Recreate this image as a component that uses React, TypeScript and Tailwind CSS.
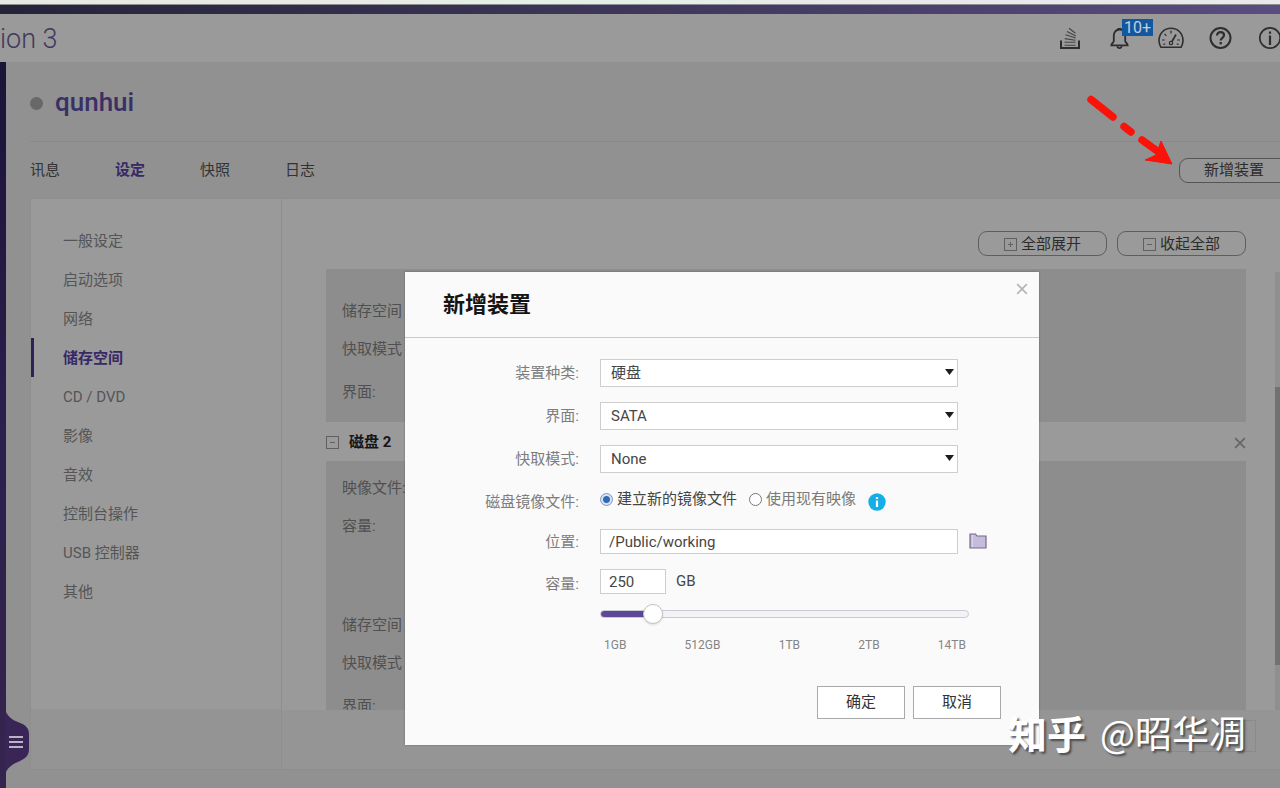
import { useState } from "react";

const tabs = ["讯息", "设定", "快照", "日志"];

const menu = [
  "一般设定",
  "启动选项",
  "网络",
  "储存空间",
  "CD / DVD",
  "影像",
  "音效",
  "控制台操作",
  "USB 控制器",
  "其他",
];

const ticks = ["1GB", "512GB", "1TB", "2TB", "14TB"];

function TrayIcon() {
  return (
    <svg viewBox="0 0 24 24" className="size-6" fill="none" stroke="#2e2e2e">
      <path d="M3 14.500V22h18v-7.500" strokeWidth="2" />
      <path d="M6.500 19.200h11M6.500 16.200h11M6.700 12.600l10.800 1.600M7.500 8.800l10.200 3.200M9 5.400l8.800 4.600M11 2.200l6.500 5" strokeWidth="1.100" stroke="#444" />
    </svg>
  );
}

function BellIcon() {
  return (
    <svg viewBox="0 0 24 24" className="size-6" fill="none" stroke="#2e2e2e" strokeWidth="1.800">
      <path d="M11.500 3.500c-3.700 0-5.700 2.800-5.700 6.300v5.200c0 1.800-2.500 2.300-2.500 4.400h16.400c0-2.100-2.500-2.600-2.500-4.400V9.800c0-3.500-2-6.300-5.700-6.300z" />
      <path d="M9.500 2.800h4M9.300 20.200c.3 1.600 1.100 2 2.200 2s1.900-.4 2.200-2" />
    </svg>
  );
}

function GaugeIcon() {
  return (
    <svg viewBox="0 0 26 24" className="h-6 w-[26px] max-w-none" fill="none" stroke="#2e2e2e">
      <path d="M2.800 21.200C1.600 19 1 17 1 14.600 1 7.500 6.200 2.300 13 2.300s12 5.200 12 12.300c0 2.400-.6 4.400-1.800 6.600z" strokeWidth="1.600" strokeLinejoin="round" />
      <path d="M13 4.500v3M4 14h2.800M19.200 14H22M6.400 7.800l2 2M5.300 18.500l2-.8M20.700 18.500l-2-.8" strokeWidth="1.200" />
      <path d="M18 8.500l-4 7" strokeWidth="1.700" />
      <circle cx="13" cy="17" r="1.700" strokeWidth="1.200" />
    </svg>
  );
}

function HelpIcon() {
  return (
    <svg viewBox="0 0 24 24" className="size-6" fill="none" stroke="#2e2e2e">
      <circle cx="12.500" cy="12" r="10" strokeWidth="2" />
      <path d="M9 9.600c0-2.200 1.500-3.400 3.500-3.400s3.500 1.200 3.500 3.100c0 2.400-3.300 2.600-3.300 5.200" strokeWidth="2.200" />
      <path d="M12.700 16v2.300" strokeWidth="2.400" />
    </svg>
  );
}

function InfoIcon() {
  return (
    <svg viewBox="0 0 24 24" className="size-6" fill="none" stroke="#2e2e2e">
      <circle cx="12" cy="12" r="10.200" strokeWidth="1.700" />
      <path d="M12 9.600V19M12 5.500v2.200" strokeWidth="2.200" />
    </svg>
  );
}

function BoxIcon({ plus }: { plus?: boolean }) {
  return (
    <svg viewBox="0 0 13 13" className="size-[13px] shrink-0" fill="none" stroke="#606060">
      <rect x="0.500" y="0.500" width="12" height="12" />
      <path d={plus ? "M4 6.500h5M6.500 4v5" : "M4 6.500h5"} />
    </svg>
  );
}

function CrossIcon({ color }: { color: string }) {
  return (
    <svg viewBox="0 0 12 12" className="size-3" fill="none" stroke={color} strokeWidth="1.700">
      <path d="M1.200 1.200l9.600 9.600M10.800 1.200l-9.600 9.600" />
    </svg>
  );
}

function FolderIcon() {
  return (
    <svg viewBox="0 0 18 16" className="h-4 w-[18px]">
      <path d="M1 1h5.500l1.500 2h9v12H1z" fill="#c5bcdc" stroke="#75698f" strokeWidth="1.200" />
      <path d="M3.500 2v12" stroke="#dcd5ea" />
    </svg>
  );
}

function Header() {
  return (
    <header className="flex h-12 shrink-0 items-center justify-between overflow-hidden bg-[#9a9a9a]">
      <h1 className="pt-0.5 text-[27px] leading-8 font-light text-[#40395e]">ion 3</h1>
      <div className="-mr-0.5 flex items-center gap-[26px]">
        <button aria-label="Tasks" className="w-6"><TrayIcon /></button>
        <button aria-label="Notifications" className="relative w-6">
          <BellIcon />
          <span className="absolute -top-[7px] left-3.5 h-[17px] w-[31px] bg-[#1257a0] text-center text-base leading-[18px] text-[#c4cedb]">
            10+
          </span>
        </button>
        <button aria-label="Dashboard" className="w-6"><GaugeIcon /></button>
        <button aria-label="Help" className="w-6"><HelpIcon /></button>
        <button aria-label="About" className="w-6"><InfoIcon /></button>
      </div>
    </header>
  );
}

function Sidebar() {
  return (
    <aside className="flex w-[251px] shrink-0 flex-col border-r border-[#8e8e8e]">
      <nav className="flex-1 pt-[22px]">
        {menu.map((item) => (
          <a
            key={item}
            href="#"
            className={`flex h-[39px] items-center border-l-[3px] pt-0.5 pl-[29px] ${
              item === "储存空间"
                ? "border-[#2f2058] font-bold text-[#372866]"
                : "border-transparent text-[#555]"
            }`}
          >
            {item}
          </a>
        ))}
      </nav>
      <div className="h-[60px] bg-[#949494]" />
    </aside>
  );
}

function Storage() {
  return (
    <section className="flex min-w-0 flex-1 flex-col">
      <div className="flex justify-end gap-2.5 pt-8 pr-[34px] pb-[13px]">
        <button className="flex h-[25px] w-[129px] items-center justify-center gap-1 rounded-[9px] border border-[#5e5e5e] pt-0.5 text-[#2c2c2c]">
          <BoxIcon plus />
          全部展开
        </button>
        <button className="flex h-[25px] w-[129px] items-center justify-center gap-1 rounded-[9px] border border-[#5e5e5e] pt-0.5 text-[#2c2c2c]">
          <BoxIcon />
          收起全部
        </button>
      </div>
      <div className="flex min-h-0 flex-1">
        <div className="min-w-0 flex-1 overflow-hidden pr-[29px] pl-11 text-[#505050]">
          <div className="h-[153px] bg-[#8d8d8d] pt-[23px] pl-4 leading-[38px]">
            <p>储存空间</p>
            <p>快取模式</p>
            <p className="leading-[48px]">界面:</p>
          </div>
          <div className="flex h-[39px] items-center pt-0.5">
            <BoxIcon />
            <h3 className="flex-1 pl-2.5 font-bold text-[#161616]">磁盘 2</h3>
            <button aria-label="移除磁盘 2"><CrossIcon color="#666666" /></button>
          </div>
          <div className="h-[280px] bg-[#8d8d8d] pt-2 pl-4 leading-[38px]">
            <p>映像文件:</p>
            <p className="mb-[61px]">容量:</p>
            <p>储存空间</p>
            <p>快取模式</p>
            <p className="leading-[48px]">界面:</p>
          </div>
        </div>
        <div className="mt-[3px] flex w-[5px] flex-col justify-between bg-[#8f8f8f]">
          <span className="h-[115px]" />
          <span className="flex-1 bg-[#717171]" />
          <span className="h-[45px]" />
        </div>
      </div>
      <footer className="flex h-[59px] shrink-0 justify-end bg-[#959595] pt-[10px] pr-6">
        <button aria-label="套用" className="h-8 w-[86px] border border-[#8a8a8a]" />
      </footer>
    </section>
  );
}

function SelectRow({ id, label, options }: { id: string; label: string; options: string[] }) {
  return (
    <>
      <label htmlFor={id} className="text-right text-[#7d7d7d]">{label}:</label>
      <div className="relative w-[358px]">
        <select
          id={id}
          className="block h-7 w-full appearance-none border border-[#cecece] bg-white pl-2.5 text-[#464646]"
        >
          {options.map((o) => (
            <option key={o}>{o}</option>
          ))}
        </select>
        <svg viewBox="0 0 9 6" className="pointer-events-none absolute top-2.5 right-1 h-1.5 w-[9px]">
          <path d="M0 0h9L4.500 6z" fill="#1d1d1d" />
        </svg>
      </div>
    </>
  );
}

function AddDeviceDialog() {
  const [image, setImage] = useState("new");
  const [path, setPath] = useState("/Public/working");
  const [size, setSize] = useState("250");
  const [pos, setPos] = useState(12);

  const radio =
    "size-[13px] appearance-none rounded-full border border-[#777] bg-white checked:border-[#8597b5] checked:bg-[radial-gradient(circle,#2f6bb5_0_3px,#d3e2f5_4px)]";

  return (
    <div
      role="dialog"
      aria-labelledby="dialog-title"
      className="absolute top-[272px] left-[405px] w-[634px] bg-[#fafafa] pb-[26px] shadow-[0_0_2px_rgba(0,0,0,0.3)]"
    >
      <div className="flex h-[66px] items-start justify-between border-b border-[#c9c9c9] pr-[11px] pl-[38px]">
        <h2 id="dialog-title" className="pt-[17px] text-[22px] leading-8 font-bold text-[#151515]">新增装置</h2>
        <button aria-label="关闭" className="pt-[11px]"><CrossIcon color="#b5b5b5" /></button>
      </div>

      <form onSubmit={(e) => e.preventDefault()}>
        <div className="grid grid-cols-[174px_1fr] items-center gap-x-[21px] gap-y-[15px] pt-[21px]">
          <SelectRow id="kind" label="装置种类" options={["硬盘"]} />
          <SelectRow id="bus" label="界面" options={["SATA"]} />
          <SelectRow id="cache" label="快取模式" options={["None"]} />
        </div>

        <div className="grid grid-cols-[174px_1fr] gap-x-[21px]">
          <span className="pt-[18px] text-right leading-[22px] text-[#7d7d7d]">磁盘镜像文件:</span>
          <div className="flex h-14 items-start pt-[15px] leading-[22px]">
            <label className="flex items-center gap-1 text-[#444]">
              <input type="radio" name="image" className={radio} checked={image === "new"} onChange={() => setImage("new")} />
              建立新的镜像文件
            </label>
            <label className="ml-3 flex items-center gap-1 text-[#7a7a7a]">
              <input type="radio" name="image" className={radio} checked={image === "old"} onChange={() => setImage("old")} />
              使用现有映像
            </label>
            <svg viewBox="0 0 18 18" className="mt-[5px] ml-3 size-[18px]">
              <circle cx="9" cy="9" r="8.700" fill="#16aee6" />
              <path d="M9 7.500V14M9 4v2" stroke="#fff" strokeWidth="2.200" />
            </svg>
          </div>

          <label htmlFor="path" className="text-right leading-[26px] text-[#7d7d7d]">位置:</label>
          <div className="flex h-10 items-start gap-[11px]">
            <input
              id="path"
              type="text"
              value={path}
              onChange={(e) => setPath(e.target.value)}
              className="h-[25px] w-[358px] border border-[#cecece] bg-white px-2 text-[#464646]"
            />
            <button type="button" aria-label="浏览" className="pt-1"><FolderIcon /></button>
          </div>

          <label htmlFor="size" className="pt-0.5 text-right leading-[26px] text-[#7d7d7d]">容量:</label>
          <div>
            <div className="flex items-center gap-2.5 text-[#464646]">
              <input
                id="size"
                type="text"
                value={size}
                onChange={(e) => setSize(e.target.value)}
                className="h-[25px] w-[66px] border border-[#cecece] bg-white px-2"
              />
              GB
            </div>
            <input
              type="range"
              aria-label="容量"
              min={0}
              max={100}
              value={pos}
              onChange={(e) => setPos(Number(e.target.value))}
              className="mt-4 block h-2 w-[369px] appearance-none rounded-full border border-[#cbcbd3] bg-[linear-gradient(90deg,#5d4796_14%,#f3f3f7_14%)] bg-origin-border [&::-webkit-slider-thumb]:size-5 [&::-webkit-slider-thumb]:appearance-none [&::-webkit-slider-thumb]:rounded-full [&::-webkit-slider-thumb]:border [&::-webkit-slider-thumb]:border-[#c4c4c8] [&::-webkit-slider-thumb]:bg-white [&::-webkit-slider-thumb]:shadow-sm"
            />
            <div className="mt-[19px] flex w-[366px] justify-between pl-1 text-xs leading-4 text-[#858585]">
              {ticks.map((t) => (
                <span key={t}>{t}</span>
              ))}
            </div>
          </div>
        </div>

        <div className="mt-[33px] flex justify-end gap-2 pr-[38px]">
          <button type="submit" className="h-[33px] w-[88px] border border-[#a9a9a9] bg-white text-[#333]">确定</button>
          <button type="button" className="h-[33px] w-[88px] border border-[#a9a9a9] bg-white text-[#333]">取消</button>
        </div>
      </form>
    </div>
  );
}

export default function App() {
  return (
    <div className="relative flex h-screen flex-col overflow-hidden bg-[#919191] font-[Roboto,'Noto_Sans_CJK_SC',sans-serif] text-[15px]">
      <div className="h-[5px] shrink-0 border-b border-[#8d8d94] bg-[linear-gradient(90deg,#e9e9e4_26%,#e3f0e6_40%,#e3f0e6_52%,#e9e8ea_64%)]" />
      <div className="h-[9px] shrink-0 bg-linear-to-r from-[#252338] to-[#5a4d80]" />
      <Header />

      <div className="flex min-h-0 flex-1">
        <div className="relative w-1.5 shrink-0 bg-linear-to-b from-[#1b1338] via-[#2b1f4c] to-[#35244e]">
          <button aria-label="菜单" className="absolute bottom-4 left-0">
            <svg viewBox="0 0 29 60" className="h-[60px] w-[29px] max-w-none">
              <path d="M5 0h1c3 6 7 8 13 10.500 7 2.500 10 6 10 11.500v15c0 6-3 9-9 12-6 2.500-11 5-14 11H5z" fill="#3a2656" />
              <path d="M9 25h14M9 30h14M9 35h14" stroke="#b9b3c4" strokeWidth="2.200" />
            </svg>
          </button>
        </div>

        <main className="flex min-w-0 flex-1 flex-col pb-[18px] pl-6">
          <div className="flex h-20 shrink-0 items-center gap-3 border-b border-[#898989]">
            <span className="mt-1 size-[13px] rounded-full bg-[#686868]" />
            <h2 className="text-[26px] leading-8 font-medium text-[#3a2f66]">qunhui</h2>
          </div>

          <div className="flex h-14 shrink-0 items-center justify-between">
            <nav className="flex gap-[55px]">
              {tabs.map((t) => (
                <a key={t} href="#" className={t === "设定" ? "font-bold text-[#372866]" : "text-[#333]"}>
                  {t}
                </a>
              ))}
            </nav>
            <button className="-mr-[9px] h-[25px] w-[110px] rounded-[9px] border border-[#555] bg-[#969696] text-[#2c2c2c]">
              新增装置
            </button>
          </div>

          <div className="flex min-h-0 flex-1 border-y border-l border-[#8e8e8e] bg-[#9a9a9a]">
            <Sidebar />
            <Storage />
          </div>
        </main>
      </div>

      {/* pointer towards the add button */}
      <svg viewBox="0 0 92 76" className="absolute top-[92px] left-[1084px] h-[76px] w-[92px]">
        <path d="M7 7.500l22 17.500M40 34.500l7 5.500M58 48l18 13" stroke="#fb1208" strokeWidth="7.500" strokeLinecap="round" />
        <path d="M77 49l11 23-27-4 11-5z" fill="#fb1208" stroke="#fb1208" />
      </svg>

      <AddDeviceDialog />

      <p className="pointer-events-none absolute top-[706px] right-[34px] flex items-center gap-3.5 font-['Noto_Sans_CJK_SC',sans-serif] text-4xl leading-[52px] text-white [text-shadow:2px_2px_2px_rgba(60,60,60,0.8)]">
        <span className="text-[39px] font-bold">知乎</span>
        <span className="text-[37px]">@昭华凋</span>
      </p>
    </div>
  );
}
